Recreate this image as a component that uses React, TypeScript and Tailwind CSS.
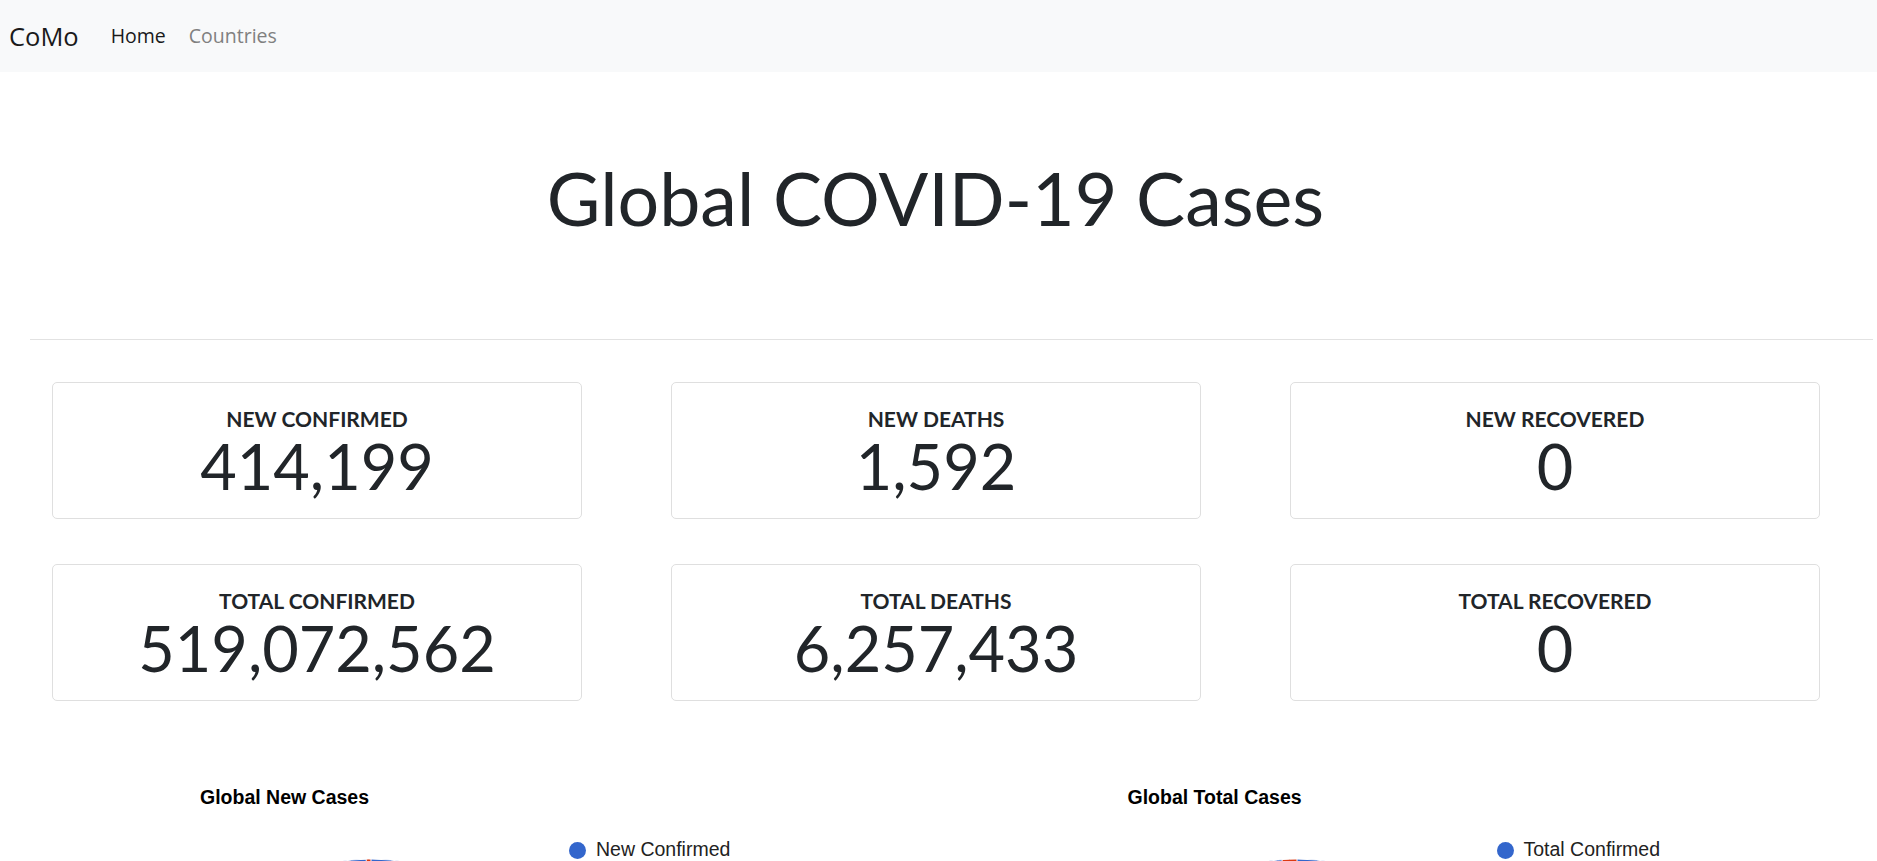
import React from "react"

type Stat = { label: string; value: string }

const stats: Stat[] = [
  { label: "NEW CONFIRMED", value: "414,199" },
  { label: "NEW DEATHS", value: "1,592" },
  { label: "NEW RECOVERED", value: "0" },
  { label: "TOTAL CONFIRMED", value: "519,072,562" },
  { label: "TOTAL DEATHS", value: "6,257,433" },
  { label: "TOTAL RECOVERED", value: "0" },
]

function StatCard({ label, value }: Stat) {
  return (
    <div className="h-[137px] border border-[#dfdfdf] rounded-[5px] flex flex-col items-center pt-[24px] text-[#212529]">
      <div className="text-[21px] leading-[24px] font-bold">{label}</div>
      <div className="text-[63px] leading-[70px] font-normal">{value}</div>
    </div>
  )
}

function Pie({ share }: { share: number }) {
  const r = 200
  const c = 202
  const a = share * 2 * Math.PI
  const x = c - r * Math.sin(a)
  const y = c - r * Math.cos(a)
  return (
    <svg width={c * 2} height={c * 2} className="shrink-0">
      <circle cx={c} cy={c} r={r} fill="#3366cc" stroke="#ffffff" strokeWidth={1} />
      <path d={`M${c},${c} L${x},${y} A${r},${r} 0 0 1 ${c},${c - r} Z`} fill="#dc3912" stroke="#ffffff" strokeWidth={1} />
    </svg>
  )
}

type ChartProps = {
  title: string
  legend: string
  share: number
  titlePad: string
  rowPad: string
  legendGap: string
}

function Chart({ title, legend, share, titlePad, rowPad, legendGap }: ChartProps) {
  return (
    <div className="flex flex-col" style={{ fontFamily: "Arial, 'Liberation Sans', sans-serif" }}>
      <div className={`${titlePad} text-[19.5px] font-bold text-black leading-[22px] mt-[1px]`}>{title}</div>
      <div className={`${rowPad} flex items-start mt-[31px]`}>
        <div className="mt-[18px]">
          <Pie share={share} />
        </div>
        <div className={`${legendGap} flex items-center gap-[10px] h-[20px] mt-[1px]`}>
          <span className="w-[17px] h-[17px] rounded-full bg-[#3366cc]" />
          <span className="text-[19.5px] text-[#222222]">{legend}</span>
        </div>
      </div>
    </div>
  )
}

export default function App() {
  return (
    <div className="h-screen overflow-hidden bg-white" style={{ fontFamily: "Lato, 'Noto Sans', sans-serif" }}>
      <nav className="h-[72px] bg-[#f8f9fa] flex items-center px-[9px]" style={{ fontFamily: "'Open Sans', 'Noto Sans', sans-serif" }}>
        <span className="text-[25.5px] text-[#1a1a1a] mr-[32px]">CoMo</span>
        <a className="text-[19.5px] text-[#1a1a1a]">Home</a>
        <a className="text-[19.5px] text-[#808080] ml-[23px]">Countries</a>
      </nav>

      <main className="pl-[30px] pr-[4px]">
        <h1 className="text-center mr-[32px] pt-[81px] text-[73.5px] leading-[90px] font-normal text-[#212529]">Global COVID-19 Cases</h1>
        <hr className="mt-[96px] border-t border-[#e2e2e2]" />

        <div className="grid grid-cols-[530px_530px_530px] gap-x-[89px] gap-y-[45px] pl-[22px] mt-[42px]">
          {stats.map((s) => (
            <StatCard key={s.label} {...s} />
          ))}
        </div>

        <div className="grid grid-cols-2 mt-[84px]">
          <Chart title="Global New Cases" legend="New Confirmed" share={1592 / 415791} titlePad="pl-[170px]" rowPad="pl-[139px]" legendGap="ml-[-4px]" />
          <Chart title="Global Total Cases" legend="Total Confirmed" share={6257433 / 525329995} titlePad="pl-[176px]" rowPad="pl-[143px]" legendGap="ml-[-2px]" />
        </div>
      </main>
    </div>
  )
}
